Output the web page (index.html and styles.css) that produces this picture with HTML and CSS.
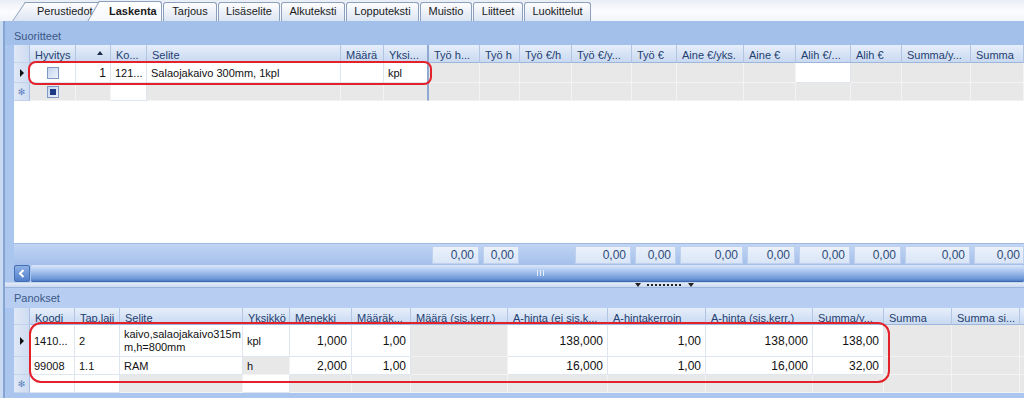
FILE: index.html
```html
<!DOCTYPE html>
<html lang="fi">
<head>
    <meta charset="UTF-8">
    <meta name="viewport" content="width=device-width, initial-scale=1.0">
    <title>Laskenta</title>
    <link rel="stylesheet" href="styles.css">
</head>
<body>

    <!-- välilehdet -->
    <div class="tabstrip">
        <div class="tab slant first">Perustiedot</div>
        <div class="tab slant active">Laskenta</div>
        <div class="tab" style="width: 54px">Tarjous</div>
        <div class="tab" style="width: 62px">Lisäselite</div>
        <div class="tab" style="width: 64px">Alkuteksti</div>
        <div class="tab" style="width: 73px">Lopputeksti</div>
        <div class="tab" style="width: 52px">Muistio</div>
        <div class="tab" style="width: 50px">Liitteet</div>
        <div class="tab" style="width: 67px">Luokittelut</div>
    </div>

    <div class="page">
        <div class="group-label">Suoritteet</div>

        <!-- suoritteet -->
        <div class="grid top">
            <div class="row hdr">
                <div class="cell ind"></div>
                <div class="cell">Hyvitys</div>
                <div class="cell sort"><span class="arrow"></span></div>
                <div class="cell">Ko...</div>
                <div class="cell">Selite</div>
                <div class="cell">Määrä</div>
                <div class="cell freeze">Yksi...</div>
                <div class="cell">Työ h...</div>
                <div class="cell">Työ h</div>
                <div class="cell">Työ €/h</div>
                <div class="cell">Työ €/y...</div>
                <div class="cell">Työ €</div>
                <div class="cell">Aine €/yks.</div>
                <div class="cell">Aine €</div>
                <div class="cell">Alih €/...</div>
                <div class="cell">Alih €</div>
                <div class="cell">Summa/y...</div>
                <div class="cell">Summa</div>
            </div>
            <div class="row data first-row">
                <div class="cell ind"><span class="current"></span></div>
                <div class="cell center"><span class="chk"></span></div>
                <div class="cell num">1</div>
                <div class="cell">121...</div>
                <div class="cell">Salaojakaivo 300mm, 1kpl</div>
                <div class="cell"></div>
                <div class="cell freeze">kpl</div>
                <div class="cell ro"></div>
                <div class="cell ro"></div>
                <div class="cell ro"></div>
                <div class="cell ro"></div>
                <div class="cell ro"></div>
                <div class="cell ro"></div>
                <div class="cell ro"></div>
                <div class="cell"></div>
                <div class="cell ro"></div>
                <div class="cell ro"></div>
                <div class="cell ro"></div>
            </div>
            <div class="row data new-row">
                <div class="cell ind"><span class="star">✻</span></div>
                <div class="cell center ro"><span class="chk mixed"></span></div>
                <div class="cell ro"></div>
                <div class="cell"></div>
                <div class="cell ro"></div>
                <div class="cell ro"></div>
                <div class="cell ro freeze"></div>
                <div class="cell ro"></div>
                <div class="cell ro"></div>
                <div class="cell ro"></div>
                <div class="cell ro"></div>
                <div class="cell ro"></div>
                <div class="cell ro"></div>
                <div class="cell ro"></div>
                <div class="cell ro"></div>
                <div class="cell ro"></div>
                <div class="cell ro"></div>
                <div class="cell ro"></div>
            </div>
            <div class="grid-space"></div>
            <div class="row totals">
                <div></div><div></div><div></div><div></div><div></div><div></div><div></div>
                <div class="tot">0,00</div>
                <div class="tot">0,00</div>
                <div></div>
                <div class="tot">0,00</div>
                <div class="tot">0,00</div>
                <div class="tot">0,00</div>
                <div class="tot">0,00</div>
                <div class="tot">0,00</div>
                <div class="tot">0,00</div>
                <div class="tot">0,00</div>
                <div class="tot">0,00</div>
            </div>
            <div class="hscroll">
                <div class="sbtn">
                    <svg width="8" height="9" viewBox="0 0 8 9"><polyline points="5.5,1 2,4.5 5.5,8" fill="none" stroke="#fff" stroke-width="2"/></svg>
                </div>
                <div class="thumb"><span class="grip"></span></div>
            </div>
        </div>

        <div class="splitter">
            <span class="tri"></span>
            <span class="dots"></span>
            <span class="tri"></span>
        </div>

        <div class="group-label panokset">Panokset</div>

        <!-- panokset -->
        <div class="grid bottom">
            <div class="row hdr">
                <div class="cell ind"></div>
                <div class="cell">Koodi</div>
                <div class="cell">Tap.laji</div>
                <div class="cell">Selite</div>
                <div class="cell">Yksikkö</div>
                <div class="cell">Menekki</div>
                <div class="cell">Määräk...</div>
                <div class="cell">Määrä (sis.kerr.)</div>
                <div class="cell">A-hinta (ei sis.k...</div>
                <div class="cell">A-hintakerroin</div>
                <div class="cell">A-hinta (sis.kerr.)</div>
                <div class="cell">Summa/y...</div>
                <div class="cell">Summa</div>
                <div class="cell">Summa si...</div>
                <div class="cell"></div>
            </div>
            <div class="row data tall">
                <div class="cell ind"><span class="current"></span></div>
                <div class="cell">1410...</div>
                <div class="cell">2</div>
                <div class="cell wrap">kaivo,salaojakaivo315m<br>m,h=800mm</div>
                <div class="cell">kpl</div>
                <div class="cell num">1,000</div>
                <div class="cell num">1,00</div>
                <div class="cell ro"></div>
                <div class="cell num">138,000</div>
                <div class="cell num">1,00</div>
                <div class="cell num">138,000</div>
                <div class="cell num">138,00</div>
                <div class="cell ro"></div>
                <div class="cell ro"></div>
                <div class="cell ro"></div>
            </div>
            <div class="row data">
                <div class="cell ind"></div>
                <div class="cell">99008</div>
                <div class="cell">1.1</div>
                <div class="cell">RAM</div>
                <div class="cell ro">h</div>
                <div class="cell num">2,000</div>
                <div class="cell num">1,00</div>
                <div class="cell ro"></div>
                <div class="cell num">16,000</div>
                <div class="cell num">1,00</div>
                <div class="cell num">16,000</div>
                <div class="cell num">32,00</div>
                <div class="cell ro"></div>
                <div class="cell ro"></div>
                <div class="cell ro"></div>
            </div>
            <div class="row data">
                <div class="cell ind"><span class="star">✻</span></div>
                <div class="cell"></div>
                <div class="cell"></div>
                <div class="cell ro"></div>
                <div class="cell"></div>
                <div class="cell ro"></div>
                <div class="cell ro"></div>
                <div class="cell ro"></div>
                <div class="cell ro"></div>
                <div class="cell ro"></div>
                <div class="cell ro"></div>
                <div class="cell ro"></div>
                <div class="cell ro"></div>
                <div class="cell ro"></div>
                <div class="cell ro"></div>
            </div>
        </div>
    </div>

    <!-- punaiset korostukset kuvan päällä -->
    <div class="mark mark-top"></div>
    <div class="mark mark-bottom"></div>

</body>
</html>
```

FILE: styles.css
```css
* {
    box-sizing: border-box;
}
body {
    margin: 0;
    width: 1024px;
    height: 398px;
    overflow: hidden;
    position: relative;
    background: #c9daf3;
    font-family: "Liberation Sans", Arial, sans-serif;
    font-size: 11px;
    color: #111;
}

/* välilehdet */
.tabstrip {
    height: 21px;
    display: flex;
    align-items: flex-end;
    gap: 1px;
    padding-left: 25px;
    background: linear-gradient(#e9eef6, #fbfcfe 55%, #f1f5fa);
}
.tab {
    height: 19px;
    border: 1px solid #8c9fbc;
    border-bottom: none;
    border-radius: 3px 3px 0 0;
    background: linear-gradient(#fdfdfe, #dce5f2);
    text-align: center;
    line-height: 17px;
    color: #1a1a1a;
    white-space: nowrap;
}
.tab.slant {
    position: relative;
    z-index: 0;
    border: none;
    background: none;
    text-align: left;
    line-height: 19px;
}
.tab.slant::before {
    content: "";
    position: absolute;
    z-index: -1;
    top: 0;
    bottom: 0;
    left: 0;
    width: 26px;
    border-top: 1px solid #8c9fbc;
    border-left: 1px solid #8c9fbc;
    background: linear-gradient(#fdfdfe, #dce5f2);
    transform: skewX(-34deg);
    transform-origin: top left;
}
.tab.slant::after {
    content: "";
    position: absolute;
    z-index: -1;
    top: 0;
    bottom: 0;
    left: 10px;
    right: 0;
    border-top: 1px solid #8c9fbc;
    border-right: 1px solid #8c9fbc;
    border-radius: 0 3px 0 0;
    background: linear-gradient(#fdfdfe, #dce5f2);
}
.tab.first {
    width: 79px;
    padding-left: 12px;
    overflow: visible;
}
.tab.active {
    width: 63px;
    height: 20px;
    margin-left: -6px;
    padding-left: 10px;
    font-weight: bold;
    line-height: 20px;
}
.tab.active::before,
.tab.active::after {
    background: linear-gradient(#ffffff, #f6f8fc);
}
.tab.active::before {
    transform: skewX(-30deg);
}

/* sivu */
.page {
    margin-left: 3px;
    border-left: 2px solid #86a4d2;
    padding-left: 9px;
    background: #aac5ee;
    height: 377px;
}
.group-label {
    height: 24px;
    padding-top: 9px;
    line-height: 13px;
    color: #3b5887;
    background: #a3c0eb;
    margin-left: -9px;
    padding-left: 9px;
}
.group-label.panokset {
    height: 20px;
    padding-top: 4px;
    background: #b7cef2;
}

/* taulukot */
.grid {
    overflow: hidden;
    background: #fff;
}
.row {
    display: grid;
    width: max-content;
}
.top .row {
    grid-template-columns: 16px 46px 35px 36px 194px 43px 45px 51px 40px 52px 60px 45px 67px 52px 55px 51px 69px 53px;
}
.bottom .row {
    grid-template-columns: 16px 45px 45px 123px 47px 62px 59px 97px 100px 98px 107px 71px 68px 68px 60px;
}
.cell {
    display: flex;
    align-items: center;
    padding: 0 4px;
    white-space: nowrap;
    overflow: hidden;
    border-right: 1px solid #dfe6f0;
    border-bottom: 1px solid #dfe6f0;
    background: #fff;
}
.cell.ro {
    background: #e8e8e8;
    border-color: #f3f3f3;
}
.cell.num {
    justify-content: flex-end;
    font-size: 12px;
}
.cell.center {
    justify-content: center;
}
.cell.wrap {
    white-space: normal;
    line-height: 13px;
}
.cell.freeze {
    border-right: 2px solid #90a9d2;
}
.hdr {
    height: 18px;
}
.bottom .hdr {
    height: 17px;
}
.hdr .cell {
    align-items: flex-start;
    padding: 4px 0 0 5px;
    color: #23406f;
    background: linear-gradient(#e6eefa, #c9d9f1);
    border-right: 1px solid #b2c6e4;
    border-bottom: 1px solid #9db6dc;
}
.hdr .cell.freeze {
    border-right: 2px solid #90a9d2;
}
.hdr .sort {
    justify-content: flex-end;
    padding: 6px 7px 0 0;
}
.arrow {
    border-left: 3px solid transparent;
    border-right: 3px solid transparent;
    border-bottom: 4px solid #1c2c4a;
}
.data {
    height: 18px;
}
.top .first-row {
    height: 20px;
}
.bottom .tall {
    height: 32px;
}
.cell.ind,
.hdr .cell.ind {
    padding: 0;
    justify-content: center;
    align-items: center;
    background: linear-gradient(90deg, #dfe8f6, #cfdcf1);
    border-right: 1px solid #a9bfe2;
    border-bottom: 1px solid #c3d3ec;
}
.current {
    border-top: 4px solid transparent;
    border-bottom: 4px solid transparent;
    border-left: 4px solid #111;
}
.star {
    font-family: "DejaVu Sans", sans-serif;
    font-size: 9px;
    color: #5d82bd;
}
.chk {
    width: 12px;
    height: 12px;
    border: 1px solid #7d98c2;
    background: linear-gradient(135deg, #c3d4ee, #eef3fb);
    display: flex;
    align-items: center;
    justify-content: center;
}
.chk.mixed::after {
    content: "";
    width: 6px;
    height: 6px;
    background: #1f3a84;
}
.grid-space {
    height: 142px;
    background: #fff;
}

/* summarivi */
.totals {
    height: 22px;
    background: linear-gradient(#c1d5f4, #a4bfea);
    border-top: 1px solid #9fb8df;
}
.tot {
    margin: 2px 1px 2px 3px;
    background: linear-gradient(#ebf1fb, #d9e5f7);
    border: 1px solid #bfd1ee;
    text-align: right;
    padding-right: 4px;
    line-height: 16px;
    font-size: 12px;
    color: #2e4b78;
}
.tot:last-child {
    margin-right: 0;
    padding-right: 3px;
}

/* vierityspalkki */
.hscroll {
    height: 17px;
    display: flex;
    gap: 1px;
    background: #aac5ee;
}
.sbtn {
    width: 16px;
    border-radius: 2px;
    background: linear-gradient(#8fb1e6, #4e7ecb);
    border: 1px solid #456fb3;
    display: flex;
    align-items: center;
    justify-content: center;
}
.thumb {
    flex: 1;
    border-radius: 2px;
    background: linear-gradient(#dbe7f8, #a9c4ee 40%, #6f99d8 85%, #4f7dc6);
    border-bottom: 1px solid #3f69ae;
    display: flex;
    align-items: center;
    padding-left: 506px;
}
.grip {
    width: 7px;
    height: 6px;
    background: repeating-linear-gradient(90deg, #e6eefa 0 1px, transparent 1px 3px);
}

/* jakaja */
.splitter {
    height: 6px;
    margin-left: -9px;
    border-top: 1px solid #c6d6ee;
    background: linear-gradient(#e3ebf7, #cbdaf1);
    border-bottom: 1px solid #9ab4dd;
    display: flex;
    align-items: center;
    padding-left: 630px;
    gap: 6px;
}
.tri {
    border-left: 3px solid transparent;
    border-right: 3px solid transparent;
    border-top: 4px solid #222;
}
.dots {
    width: 35px;
    height: 2px;
    background: repeating-linear-gradient(90deg, #222 0 2px, transparent 2px 4px);
}

/* korostukset */
.mark {
    position: absolute;
    border: 2px solid #e3212a;
    border-radius: 8px;
}
.mark-top {
    left: 28px;
    top: 61px;
    width: 404px;
    height: 24px;
}
.mark-bottom {
    left: 29px;
    top: 322px;
    width: 861px;
    height: 61px;
    border-radius: 12px;
}
```
